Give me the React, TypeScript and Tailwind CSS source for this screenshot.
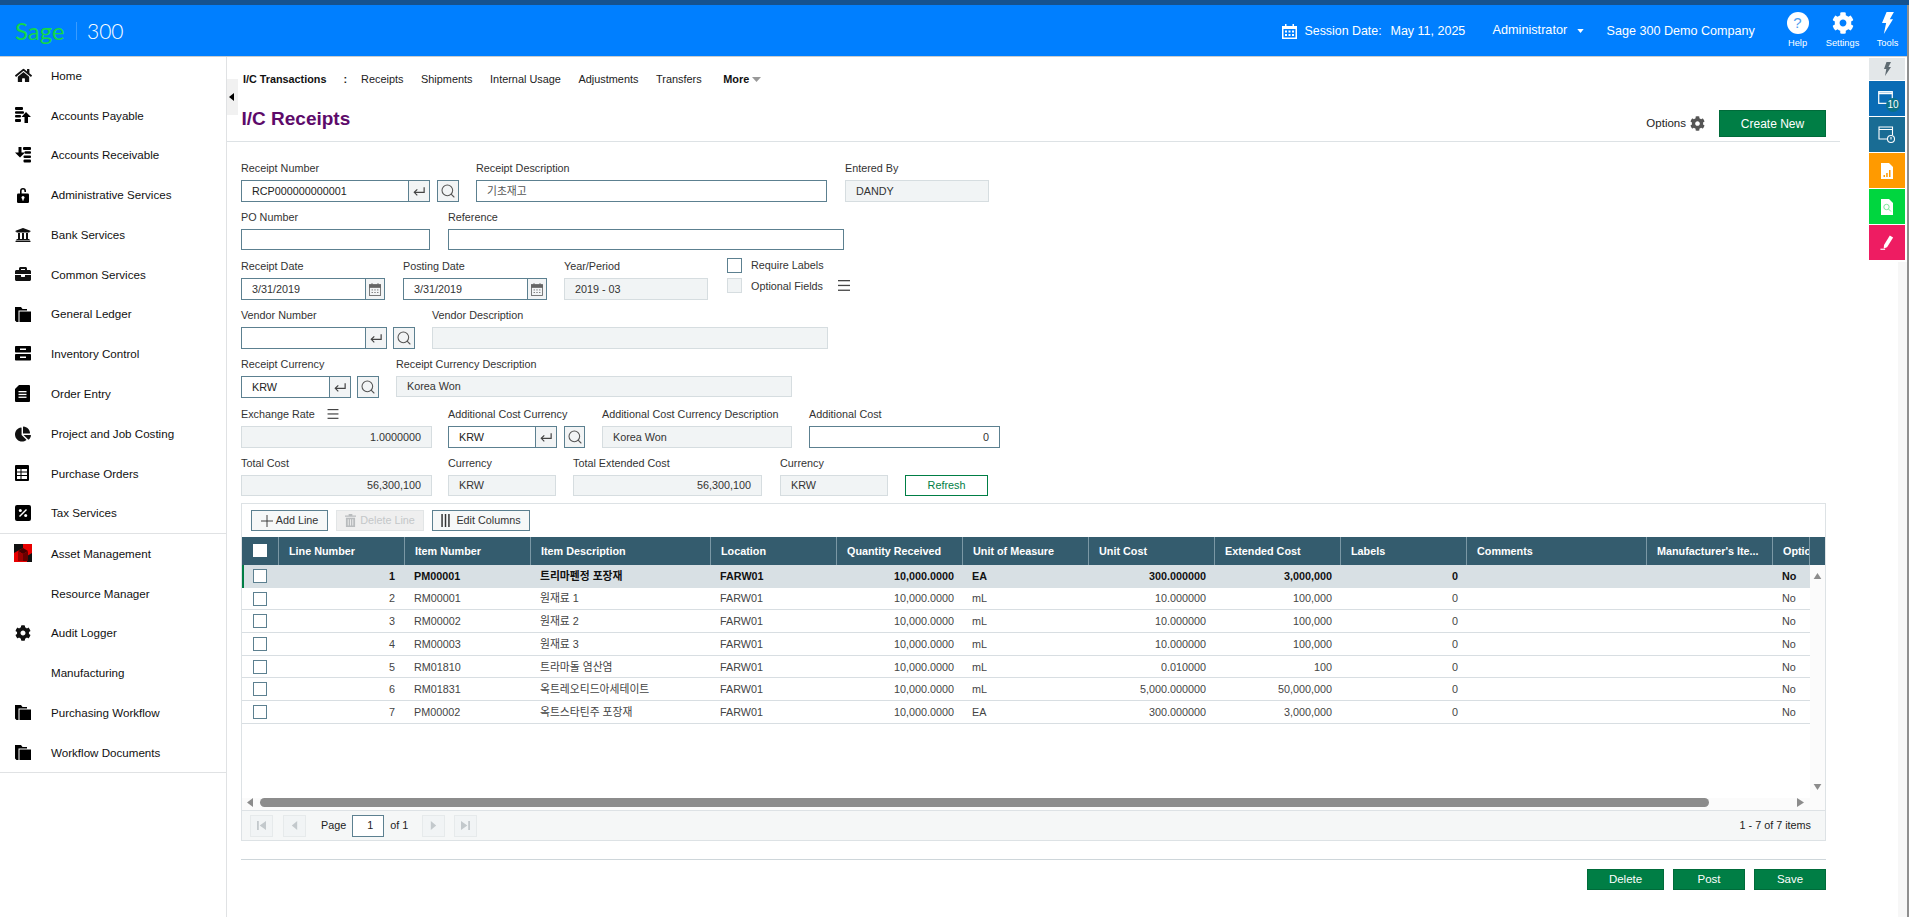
import { ReactNode } from 'react';
import { FaHome, FaUniversity, FaBriefcase, FaChartPie, FaCog } from 'react-icons/fa';
import { Search } from 'lucide-react';

const Folder = () => (
  <svg viewBox="0 0 16 15" className="w-[16px] h-[15px]" fill="#000">
    <path d="M0 0h6l1.5 2H12v1.5H3.5V15H1.5L0 13.5z" />
    <path d="M4.5 4.5H16V15H4.5z" />
  </svg>
);

const sideTop: { label: string; icon: ReactNode }[] = [
  { label: 'Home', icon: <FaHome size={17} /> },
  {
    label: 'Accounts Payable',
    icon: (
      <svg viewBox="0 0 16 16" className="w-[16px] h-[16px]" fill="#000">
        <rect x="0" y="0" width="8" height="3" rx="1" />
        <rect x="0" y="4.2" width="9" height="2.6" rx="1" />
        <rect x="0" y="8" width="6" height="2.6" rx="1" />
        <rect x="0" y="12" width="6" height="3" rx="1" />
        <path d="M11 5l5 5h-3v6h-3.5v-6H6.5z" />
      </svg>
    ),
  },
  {
    label: 'Accounts Receivable',
    icon: (
      <svg viewBox="0 0 16 16" className="w-[16px] h-[16px]" fill="#000">
        <rect x="8" y="0" width="8" height="3" rx="1" />
        <rect x="9.5" y="4.2" width="6.5" height="2.6" rx="1" />
        <rect x="8.5" y="8.4" width="7.5" height="2.6" rx="1" />
        <rect x="8.5" y="12.6" width="7.5" height="3" rx="1" />
        <path d="M3.5 0h3v5.5H10l-5 5-5-5h3.5z" />
      </svg>
    ),
  },
  {
    label: 'Administrative Services',
    icon: (
      <svg viewBox="0 0 16 16" className="w-[16px] h-[16px]" fill="#000">
        <path d="M5 7V4a3 3 0 0 1 6 0v1H9.4V4a1.4 1.4 0 0 0-2.8 0v3z" />
        <rect x="2" y="6.5" width="12" height="9.5" rx="1.2" />
        <circle cx="8" cy="10.5" r="1.5" fill="#fff" />
        <rect x="7.3" y="10.5" width="1.4" height="3" fill="#fff" />
      </svg>
    ),
  },
  { label: 'Bank Services', icon: <FaUniversity size={16} /> },
  { label: 'Common Services', icon: <FaBriefcase size={16} /> },
  { label: 'General Ledger', icon: <Folder /> },
  {
    label: 'Inventory Control',
    icon: (
      <svg viewBox="0 0 16 15" className="w-[16px] h-[15px]" fill="#000">
        <rect x="0" y="0" width="16" height="6.5" rx="0.8" />
        <rect x="0" y="8" width="16" height="6.5" rx="0.8" />
        <rect x="5" y="2.5" width="6" height="1.5" fill="#fff" />
        <rect x="5" y="10.5" width="6" height="1.5" fill="#fff" />
      </svg>
    ),
  },
  {
    label: 'Order Entry',
    icon: (
      <svg viewBox="0 0 15 17" className="w-[15px] h-[17px]" fill="#000">
        <path d="M4 0h10a1 1 0 0 1 1 1v15a1 1 0 0 1-1 1H1a1 1 0 0 1-1-1V4z" />
        <rect x="3.5" y="6" width="8" height="1.3" fill="#fff" />
        <rect x="3.5" y="8.8" width="8" height="1.3" fill="#fff" />
        <rect x="3.5" y="11.6" width="8" height="1.3" fill="#fff" />
      </svg>
    ),
  },
  { label: 'Project and Job Costing', icon: <FaChartPie size={16} /> },
  {
    label: 'Purchase Orders',
    icon: (
      <svg viewBox="0 0 14 16" className="w-[14px] h-[16px]" fill="#000">
        <rect width="14" height="16" rx="1" />
        <rect x="2" y="4" width="3.5" height="2.5" fill="#fff" />
        <rect x="6.5" y="4" width="5.5" height="2.5" fill="#fff" />
        <rect x="2" y="7.5" width="3.5" height="2.5" fill="#fff" />
        <rect x="6.5" y="7.5" width="5.5" height="2.5" fill="#fff" />
        <rect x="2" y="11" width="3.5" height="3" fill="#fff" />
        <rect x="6.5" y="11" width="5.5" height="3" fill="#fff" />
      </svg>
    ),
  },
  {
    label: 'Tax Services',
    icon: (
      <svg viewBox="0 0 16 16" className="w-[16px] h-[16px]" fill="#000">
        <rect width="16" height="16" rx="2" />
        <circle cx="5.3" cy="5.5" r="1.5" fill="#fff" />
        <circle cx="10.7" cy="10.5" r="1.5" fill="#fff" />
        <path d="M11 4l1 1-7 7-1-1z" fill="#fff" />
      </svg>
    ),
  },
];

const sideBottom: { label: string; icon: ReactNode }[] = [
  {
    label: 'Asset Management',
    icon: (
      <svg viewBox="0 0 18 18" className="w-[18px] h-[18px] -ml-[1px]">
        <rect width="18" height="18" fill="#e80000" />
        <path d="M0 0h9v4L0 9zM18 9v9h-5v-6z" fill="#111" />
        <path d="M4 7l5-3 5 3-5 3z" fill="#400" />
        <path d="M4 7l5 3v7H4z" fill="#900" />
        <path d="M14 7l-5 3v7h5z" fill="#600" />
      </svg>
    ),
  },
  { label: 'Resource Manager', icon: null },
  { label: 'Audit Logger', icon: <FaCog size={16} /> },
  { label: 'Manufacturing', icon: null },
  { label: 'Purchasing Workflow', icon: <Folder /> },
  { label: 'Workflow Documents', icon: <Folder /> },
];

const SideItem = ({ label, icon }: { label: string; icon: ReactNode }) => (
  <div className="h-[39.8px] flex items-center pl-[15px] text-[11.6px] text-[#111]">
    <div className="w-[36px] flex items-center">{icon}</div>
    <span>{label}</span>
  </div>
);

const Enter = () => (
  <svg viewBox="0 0 14 12" className="w-[12px] h-[11px]" fill="none" stroke="#444" strokeWidth="1.4">
    <path d="M13 1v6H2" />
    <path d="M5 3.5L1.5 7 5 10.5" />
  </svg>
);

const Calendar = () => (
  <svg viewBox="0 0 14 15" className="w-[12px] h-[13px]" fill="none" stroke="#666">
    <rect x="0.5" y="2" width="13" height="12.5" />
    <rect x="0.5" y="2" width="13" height="3" fill="#666" />
    <path d="M3.5 0v3M10.5 0v3" />
    <path d="M3 8h1.6M6.2 8h1.6M9.4 8h1.6M3 11h1.6M6.2 11h1.6M9.4 11h1.6" />
  </svg>
);

const Hamburger = ({ className }: { className: string }) => (
  <svg viewBox="0 0 12 11" className={className} fill="#444">
    <rect y="0" width="12" height="1.3" />
    <rect y="4.8" width="12" height="1.3" />
    <rect y="9.6" width="12" height="1.3" />
  </svg>
);

const Field = ({ label, extra, className, children }: { label: string; extra?: ReactNode; className: string; children: ReactNode }) => (
  <div className={className}>
    <div className="h-[21px] pb-[3px] flex items-center text-[#333] gap-[8px]">
      <span>{label}</span>
      {extra}
    </div>
    {children}
  </div>
);

const Box = ({ value = '', className = '', right = false }: { value?: string; className?: string; right?: boolean }) => (
  <div className={`h-[22px] border border-[#5c8090] bg-white flex items-center px-[10px] text-[#333] ${right ? 'justify-end' : ''} ${className}`}>{value}</div>
);

const Off = ({ value = '', className = '', right = false }: { value?: string; className?: string; right?: boolean }) => (
  <div className={`h-[22px] border border-[#d6dde0] bg-[#f1f4f5] flex items-center px-[10px] text-[#333] ${right ? 'justify-end' : ''} ${className}`}>{value}</div>
);

const Finder = ({ value = '', sep, total, gap = 'ml-[7px]', sw = 'w-[22px]' }: { value?: string; sep: string; total: string; gap?: string; sw?: string }) => (
  <div className="flex">
    <div className={`h-[22px] border border-[#5c8090] flex bg-white ${total}`}>
      <div className="flex-1 flex items-center pl-[10px] text-[#222]">{value}</div>
      <div className={`${sep} border-l border-[#5c8090] bg-[#f2f4f5] flex items-center justify-center`}>
        <Enter />
      </div>
    </div>
    <div className={`${gap} ${sw} h-[22px] border border-[#5c8090] bg-[#f2f4f5] flex items-center justify-center`}>
      <Search size={16} strokeWidth={1.6} color="#555" />
    </div>
  </div>
);

const DateBox = ({ value }: { value: string }) => (
  <div className="w-[144px] h-[22px] border border-[#5c8090] flex bg-white">
    <div className="flex-1 flex items-center pl-[10px] text-[#333]">{value}</div>
    <div className="w-[19px] border-l border-[#5c8090] bg-[#f2f4f5] flex items-center justify-center">
      <Calendar />
    </div>
  </div>
);

const gridCols = 'grid grid-cols-[37px_126px_126px_180px_126px_126px_126px_126px_126px_126px_180px_126px_37px]';

const headers = ['Line Number', 'Item Number', 'Item Description', 'Location', 'Quantity Received', 'Unit of Measure', 'Unit Cost', 'Extended Cost', 'Labels', 'Comments', "Manufacturer's Ite...", 'Optio'];

const rows = [
  ['1', 'PM00001', '트리마펜정 포장재', 'FARW01', '10,000.0000', 'EA', '300.000000', '3,000,000', '0', 'No'],
  ['2', 'RM00001', '원재료 1', 'FARW01', '10,000.0000', 'mL', '10.000000', '100,000', '0', 'No'],
  ['3', 'RM00002', '원재료 2', 'FARW01', '10,000.0000', 'mL', '10.000000', '100,000', '0', 'No'],
  ['4', 'RM00003', '원재료 3', 'FARW01', '10,000.0000', 'mL', '10.000000', '100,000', '0', 'No'],
  ['5', 'RM01810', '트라마돌 염산염', 'FARW01', '10,000.0000', 'mL', '0.010000', '100', '0', 'No'],
  ['6', 'RM01831', '옥트레오티드아세테이트', 'FARW01', '10,000.0000', 'mL', '5,000.000000', '50,000,000', '0', 'No'],
  ['7', 'PM00002', '옥트스타틴주 포장재', 'FARW01', '10,000.0000', 'EA', '300.000000', '3,000,000', '0', 'No'],
];

const PageBtn = ({ d, className = '' }: { d: string; className?: string }) => (
  <div className={`w-[23px] h-[22px] border border-[#e6eaeb] bg-[#f1f4f5] flex items-center justify-center ${className}`}>
    <svg viewBox="0 0 10 10" className="w-[9px] h-[9px]" fill="#c3c9cc">
      <path d={d} />
    </svg>
  </div>
);

const GreenBtn = ({ children, className }: { children: ReactNode; className: string }) => (
  <button className={`bg-[#007e45] border border-[#006b3a] text-white text-[11.5px] flex items-center justify-center ${className}`}>{children}</button>
);

const Tile = ({ className, children }: { className: string; children: ReactNode }) => (
  <div className={`w-[36px] h-[35px] mb-[1px] flex items-center justify-center relative ${className}`}>{children}</div>
);

export default function App() {
  return (
    <div className="w-[1909px] h-[917px] overflow-hidden bg-white flex flex-col text-[10.8px] relative" style={{ fontFamily: '"Liberation Sans", "Noto Sans CJK KR", sans-serif' }}>
      <div className="h-[5px] bg-[#15528f] shrink-0" />
      {/* top bar */}
      <div className="h-[52px] shrink-0 bg-[#007fff] border-b border-[#c9cdd0] flex text-white relative">
        <div className="flex items-center pl-[15px]">
          <span className="w-[48px] text-[#14d84a] text-[24px] leading-none font-normal" style={{ fontFamily: 'Lato, sans-serif' }}>Sage</span>
          <div className="ml-[13px] w-px h-[18px] bg-[#3a9cff]" />
          <span className="ml-[10px] text-[21px] leading-none font-light" style={{ fontFamily: 'Lato, sans-serif' }}>300</span>
        </div>
        <div className="ml-auto flex shrink-0 -mr-[1px]">
          <div className="flex items-center pt-[1px]">
            <svg viewBox="0 0 15 15" className="w-[15px] h-[15px]" fill="#fff">
              <path d="M0 2h3V0h1.5v2h6V0H12v2h3v13H0z" />
              <rect x="1.5" y="5" width="12" height="8.5" fill="#007fff" />
              <path d="M3 6.5h2v2H3zM6.5 6.5h2v2h-2zM10 6.5h2v2h-2zM3 10h2v2H3zM6.5 10h2v2h-2zM10 10h2v2h-2z" />
            </svg>
            <span className="ml-[8px] w-[86px] text-[12.4px]">Session Date:</span>
            <span className="w-[102px] text-[12.5px]">May 11, 2025</span>
            <span className="w-[84.5px] text-[12.7px]">Administrator</span>
            <svg viewBox="0 0 8 5" className="w-[7px] h-[4px]" fill="#fff">
              <path d="M0 0h8L4 5z" />
            </svg>
            <span className="ml-[22.5px] w-[168.5px] text-[12.6px]">Sage 300 Demo Company</span>
          </div>
          <div className="flex w-[45px] flex-col items-center pt-[7px] text-[9.3px]">
            <div className="w-[22px] h-[22px] rounded-full bg-white text-[#4c9dee] text-[15px] flex items-center justify-center">?</div>
            <span className="mt-[3px]">Help</span>
          </div>
          <div className="flex w-[45px] flex-col items-center pt-[7px] text-[9.3px]">
            <FaCog size={22} />
            <span className="mt-[3px]">Settings</span>
          </div>
          <div className="flex w-[45px] flex-col items-center pt-[7px] text-[9.3px]">
            <svg viewBox="0 0 14 24" className="w-[13px] h-[22px]" fill="#fff">
              <path d="M6 0h8L9.5 8H13L3 24l2.5-12H1z" />
            </svg>
            <span className="mt-[3px]">Tools</span>
          </div>
        </div>
      </div>

      <div className="flex-1 flex min-h-0">
        {/* left nav */}
        <div className="w-[227px] shrink-0 border-r border-[#e0e2e4]">
          <div className="-mt-[1.5px]">
            {sideTop.map((s) => (
              <SideItem key={s.label} {...s} />
            ))}
          </div>
          <div className="h-px bg-[#e0e2e4]" />
          <div className="-mt-[0.5px]">
            {sideBottom.map((s) => (
              <SideItem key={s.label} {...s} />
            ))}
          </div>
          <div className="h-px bg-[#e0e2e4]" />
        </div>

        <div className="w-[1642px] shrink-0 relative">
          {/* collapse handle */}
          <div className="absolute left-0 top-[22px] w-[11px] h-[36px] bg-[#f1f1f1] flex items-center pl-[2px]">
            <svg viewBox="0 0 5 8" className="w-[5px] h-[8px]" fill="#000">
              <path d="M5 0v8L0 4z" />
            </svg>
          </div>

          <div className="h-[44px] flex items-center pl-[16px] text-[10.9px] text-[#222]">
            <b className="text-[#111] text-[10.8px]">I/C Transactions</b>
            <b className="ml-[17px]">:</b>
            <span className="ml-[14px]">Receipts</span>
            <span className="ml-[17.6px]">Shipments</span>
            <span className="ml-[17.6px]">Internal Usage</span>
            <span className="ml-[17.6px]">Adjustments</span>
            <span className="ml-[17.6px]">Transfers</span>
            <b className="ml-[21.6px] text-[#111]">More</b>
            <svg viewBox="0 0 9 5" className="ml-[3px] w-[9px] h-[5px]" fill="#999">
              <path d="M0 0h9L4.5 5z" />
            </svg>
          </div>

          <div className="w-[1613px] h-[41px] border-b border-[#dde2e5] flex items-start">
            <h1 className="ml-[14.5px] mt-[6px] text-[19px] leading-[23px] font-bold text-[#5d0a6a]">I/C Receipts</h1>
            <div className="ml-auto mt-[9px] flex items-center mr-[14px]">
              <span className="text-[11.5px] text-[#222]">Options</span>
              <FaCog size={15} color="#555" className="ml-[4px] mr-[14px]" />
              <GreenBtn className="w-[107px] h-[27px] text-[12px]">Create New</GreenBtn>
            </div>
          </div>

          {/* form */}
          <div className="pl-[14px] pt-[17px]">
            <div className="flex h-[49px]">
              <Field label="Receipt Number" className="w-[218px]">
                <Finder value="RCP000000000001" sep="w-[21px]" total="w-[190px]" />
              </Field>
              <Field label="Receipt Description" className="ml-[17px] w-[351px]">
                <Box value="기초재고" className="!text-[#555]" />
              </Field>
              <Field label="Entered By" className="ml-[18px] w-[144px]">
                <Off value="DANDY" />
              </Field>
            </div>
            <div className="flex h-[49px]">
              <Field label="PO Number" className="w-[189px]">
                <Box className="!h-[21px]" />
              </Field>
              <Field label="Reference" className="ml-[18px] w-[396px]">
                <Box className="!h-[21px]" />
              </Field>
            </div>
            <div className="flex h-[49px]">
              <Field label="Receipt Date" className="w-[144px]">
                <DateBox value="3/31/2019" />
              </Field>
              <Field label="Posting Date" className="ml-[18px] w-[144px]">
                <DateBox value="3/31/2019" />
              </Field>
              <Field label="Year/Period" className="ml-[17px] w-[144px]">
                <Off value="2019 - 03" />
              </Field>
              <div className="ml-[19px] pt-[1px]">
                <div className="flex items-center h-[15px]">
                  <div className="w-[15px] h-[15px] border border-[#5c8090] bg-white" />
                  <span className="ml-[9px] text-[#333]">Require Labels</span>
                </div>
                <div className="flex items-center h-[15px] mt-[5px]">
                  <div className="w-[15px] h-[15px] border border-[#d6dde0] bg-[#f1f4f5]" />
                  <span className="ml-[9px] pt-[2px] text-[#333]">Optional Fields</span>
                  <Hamburger className="ml-[15px] w-[12px] h-[11px]" />
                </div>
              </div>
            </div>
            <div className="flex h-[49px]">
              <Field label="Vendor Number" className="w-[174px]">
                <Finder sep="w-[21px]" total="w-[146px]" gap="ml-[6px]" />
              </Field>
              <Field label="Vendor Description" className="ml-[17px] w-[396px]">
                <Off />
              </Field>
            </div>
            <div className="flex h-[50px]">
              <Field label="Receipt Currency" className="w-[138px]">
                <Finder value="KRW" sep="w-[21px]" total="w-[110px]" gap="ml-[6px]" />
              </Field>
              <Field label="Receipt Currency Description" className="ml-[17px] w-[396px]">
                <Off value="Korea Won" className="!h-[21px]" />
              </Field>
            </div>
            <div className="flex h-[49px]">
              <Field label="Exchange Rate" extra={<Hamburger className="ml-[4px] w-[12px] h-[10px]" />} className="w-[191px]">
                <Off value="1.0000000" right />
              </Field>
              <Field label="Additional Cost Currency" className="ml-[16px] w-[137px]">
                <Finder value="KRW" sep="w-[21px]" total="w-[109px]" sw="w-[21px]" />
              </Field>
              <Field label="Additional Cost Currency Description" className="ml-[17px] w-[190px] whitespace-nowrap">
                <Off value="Korea Won" />
              </Field>
              <Field label="Additional Cost" className="ml-[17px] w-[191px]">
                <Box value="0" right />
              </Field>
            </div>
            <div className="flex h-[49px]">
              <Field label="Total Cost" className="w-[191px]">
                <Off value="56,300,100" right className="!h-[21px]" />
              </Field>
              <Field label="Currency" className="ml-[16px] w-[108px]">
                <Off value="KRW" className="!h-[21px]" />
              </Field>
              <Field label="Total Extended Cost" className="ml-[17px] w-[189px]">
                <Off value="56,300,100" right className="!h-[21px]" />
              </Field>
              <Field label="Currency" className="ml-[18px] w-[108px]">
                <Off value="KRW" className="!h-[21px]" />
              </Field>
              <button className="ml-[17px] mt-[21px] w-[83px] h-[21px] border border-[#007e45] text-[#007e45] bg-white flex items-center justify-center">Refresh</button>
            </div>

            {/* lines panel */}
            <div className="w-[1585px] h-[338px] border border-[#dde2e5] flex flex-col">
              <div className="h-[33px] shrink-0 flex pt-[6px] pl-[9px] text-[#333]">
                <button className="w-[77px] h-[21px] border border-[#5c8090] bg-[#f6f8f8] flex items-center justify-center gap-[3px]">
                  <svg viewBox="0 0 13 13" className="w-[12px] h-[12px]" stroke="#333" strokeWidth="1">
                    <path d="M6.5 0v13M0 6.5h13" />
                  </svg>
                  Add Line
                </button>
                <button className="ml-[8px] w-[88px] h-[21px] border border-[#e2e5e6] bg-[#efefef] text-[#c4c7c9] flex items-center justify-center gap-[4px]">
                  <svg viewBox="0 0 12 14" className="w-[11px] h-[13px]" fill="#b9bcbe">
                    <path d="M4 0h4v1.5h4V3H0V1.5h4zM1 4h10v10H1zM3 5.5v7h1v-7zM5.5 5.5v7h1v-7zM8 5.5v7h1v-7z" fillRule="evenodd" />
                  </svg>
                  Delete Line
                </button>
                <button className="ml-[8px] w-[98px] h-[21px] border border-[#5c8090] bg-[#f6f8f8] flex items-center justify-center gap-[6px]">
                  <svg viewBox="0 0 9 14" className="w-[9px] h-[13px]" fill="#333">
                    <rect x="0" width="1.6" height="14" />
                    <rect x="3.7" width="1.6" height="14" />
                    <rect x="7.4" width="1.6" height="14" />
                  </svg>
                  Edit Columns
                </button>
              </div>

              {/* header */}
              <div className="h-[28px] shrink-0 bg-[#345c6e] flex">
                <div className={`${gridCols} text-white font-bold`}>
                  <div className="border-r border-[#7b98a5] pl-[11px] pt-[7px]">
                    <div className="w-[14px] h-[13px] bg-white" />
                  </div>
                  {headers.map((h) => (
                    <div key={h} className="border-r border-[#7b98a5] pl-[10px] pt-[5.5px] whitespace-nowrap overflow-hidden">
                      {h}
                    </div>
                  ))}
                </div>
              </div>

              {/* body */}
              <div className="h-[233px] shrink-0 flex">
                <div className="w-[1568px]">
                  {rows.map((r, i) => (
                    <div key={r[0]} className={`${gridCols} h-[22.7px] items-center ${i === 0 ? 'bg-[#d8e0e4] font-bold text-[#111]' : 'border-b border-[#d8dee2] text-[#444]'}`}>
                      <div className={`h-full flex items-center ${i === 0 ? 'border-l-[2px] border-[#007e45] pl-[9px]' : 'pl-[11px]'}`}>
                        <div className="w-[14px] h-[14px] border border-[#5c8090] bg-white" />
                      </div>
                      <div className="text-right pr-[10px]">{r[0]}</div>
                      <div className="pl-[9px]">{r[1]}</div>
                      <div className="pl-[9px]">{r[2]}</div>
                      <div className="pl-[9px]">{r[3]}</div>
                      <div className="text-right pr-[9px]">{r[4]}</div>
                      <div className="pl-[9px]">{r[5]}</div>
                      <div className="text-right pr-[9px]">{r[6]}</div>
                      <div className="text-right pr-[9px]">{r[7]}</div>
                      <div className="text-right pr-[9px]">{r[8]}</div>
                      <div />
                      <div />
                      <div className="pl-[9px]">{r[9]}</div>
                    </div>
                  ))}
                </div>
                <div className="flex-1 bg-[#fbfbfb] flex flex-col items-center justify-between pt-[8px] pb-[8px]">
                  <svg viewBox="0 0 9 7" className="w-[9px] h-[6px]" fill="#8c8c8c">
                    <path d="M4.5 0L9 7H0z" />
                  </svg>
                  <svg viewBox="0 0 9 7" className="w-[9px] h-[6px]" fill="#8c8c8c">
                    <path d="M0 0h9L4.5 7z" />
                  </svg>
                </div>
              </div>

              {/* horizontal scroll */}
              <div className="h-[12px] shrink-0 bg-[#fbfbfb] flex items-start pl-[5px]">
                <svg viewBox="0 0 6 9" className="w-[6px] h-[9px]" fill="#8c8c8c">
                  <path d="M6 0v9L0 4.5z" />
                </svg>
                <div className="ml-[7px] w-[1449px] h-[9px] rounded-full bg-[#8c8c8c]" />
                <svg viewBox="0 0 7 9" className="ml-[88px] w-[7px] h-[9px]" fill="#8c8c8c">
                  <path d="M0 0v9l7-4.5z" />
                </svg>
              </div>

              {/* pager */}
              <div className="flex-1 border-t border-[#dde2e5] bg-[#f5f7f7] flex items-center pl-[8px] pr-[14px] text-[#222]">
                <PageBtn d="M0 0h2v10H0zM10 0v10L3 5z" />
                <PageBtn d="M8 0v10L2 5z" className="ml-[10px]" />
                <span className="ml-[15px]">Page</span>
                <div className="ml-[6px] w-[32px] h-[22px] border border-[#5c8090] bg-white flex items-center justify-end pr-[10px]">1</div>
                <span className="ml-[6px]">of 1</span>
                <PageBtn d="M2 0v10l6-5z" className="ml-[14px]" />
                <PageBtn d="M0 0v10l7-5zM8 0h2v10H8z" className="ml-[9px]" />
                <span className="ml-auto">1 - 7 of 7 items</span>
              </div>
            </div>

            <div className="w-[1585px] h-px bg-[#ced6da] mt-[18px]" />
            <div className="w-[1585px] mt-[9px] flex justify-end gap-[9px]">
              <GreenBtn className="w-[77px] h-[21px]">Delete</GreenBtn>
              <GreenBtn className="w-[72px] h-[21px]">Post</GreenBtn>
              <GreenBtn className="w-[72px] h-[21px]">Save</GreenBtn>
            </div>
          </div>
        </div>

        {/* right rail */}
        <div className="w-[40px] shrink-0 pt-[1px]">
          <Tile className="!h-[22px] bg-[#e3e7e9]">
            <svg viewBox="0 0 8 14" className="w-[8px] h-[14px]" fill="#5f6b72">
              <path d="M3.5 0H8L5.5 5H8L2 14l1.3-7H1z" />
            </svg>
          </Tile>
          <Tile className="bg-[#0a6cb5]">
            <svg viewBox="0 0 16 14" className="absolute left-[9px] top-[10px] w-[15px] h-[13px]" fill="none" stroke="#fff" strokeWidth="1.3">
              <rect x="0.7" y="0.7" width="14.6" height="12.6" />
              <path d="M0.7 2.5h14.6" strokeWidth="2" />
            </svg>
            <span className="absolute right-[5px] bottom-[4px] w-[14px] h-[14px] rounded-full bg-[#0b7186] text-white text-[10px] leading-[14px] text-center">10</span>
          </Tile>
          <Tile className="bg-[#196c94]">
            <svg viewBox="0 0 18 18" className="w-[18px] h-[18px]" fill="none" stroke="#fff" strokeWidth="1.1">
              <path d="M9 13H1V1h13.5v8M1 3.5h13.5" />
              <circle cx="13" cy="13" r="3.5" />
              <path d="M13 11v2.5" />
            </svg>
          </Tile>
          <Tile className="bg-[#ff9a00]">
            <svg viewBox="0 0 12 16" className="w-[12px] h-[16px]" fill="#fff">
              <path d="M0 0h8l4 4v12H0z" />
              <path d="M2.5 12h1.5v2H2.5zM5.2 10h1.5v4H5.2zM8 7h1.5v7H8z" fill="#ff9a00" />
            </svg>
          </Tile>
          <Tile className="bg-[#00d63f]">
            <svg viewBox="0 0 12 16" className="w-[12px] h-[16px]" fill="#fff">
              <path d="M0 0h8l4 4v12H0z" />
              <circle cx="5.5" cy="8" r="2.7" fill="none" stroke="#7be89a" />
              <path d="M7.5 10l2.5 2.5" stroke="#7be89a" />
            </svg>
          </Tile>
          <Tile className="bg-[#ee1c62]">
            <svg viewBox="0 0 14 16" className="w-[14px] h-[15px]" fill="#fff">
              <path d="M10 0.5l3.5 2.2-6.5 10.3-3.5 1.5 0.3-3.8z" />
              <rect x="0" y="14.6" width="5" height="1.2" />
            </svg>
          </Tile>
        </div>
      </div>
      {/* page scrollbar */}
      <div className="absolute right-0 top-[5px] bottom-0 w-[2px] bg-[#8f8f8f]" />
      <div className="absolute right-[2px] top-[262px] bottom-0 w-[9px] bg-[#f7f7f7]" />
    </div>
  );
}
